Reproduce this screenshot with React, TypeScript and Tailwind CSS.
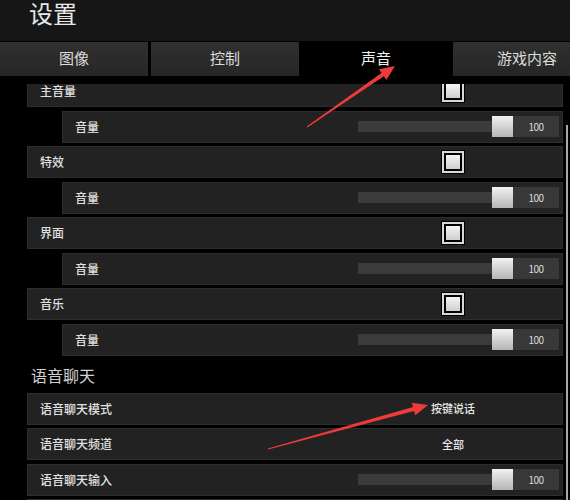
import React from 'react';

type Row =
  | { kind: 'toggle'; label: string }
  | { kind: 'volume'; label: string }
  | { kind: 'choice'; label: string; value: string }
  | { kind: 'slider'; label: string };

const soundRows: Row[] = [
  { kind: 'toggle', label: '主音量' },
  { kind: 'volume', label: '音量' },
  { kind: 'toggle', label: '特效' },
  { kind: 'volume', label: '音量' },
  { kind: 'toggle', label: '界面' },
  { kind: 'volume', label: '音量' },
  { kind: 'toggle', label: '音乐' },
  { kind: 'volume', label: '音量' },
];

const voiceRows: Row[] = [
  { kind: 'choice', label: '语音聊天模式', value: '按键说话' },
  { kind: 'choice', label: '语音聊天频道', value: '全部' },
  { kind: 'slider', label: '语音聊天输入' },
];

const tabs = ['图像', '控制', '声音', '游戏内容'];

const Checkbox = () => (
  <div className="w-[22px] h-[22px] border-2 border-[#d8d8d8] bg-black p-[2px] shadow-[0_0_0_1px_#000]">
    <div className="w-full h-full bg-gradient-to-b from-[#f4f4f4] to-[#cfcfcf]" />
  </div>
);

const Slider = () => (
  <div className="flex items-center">
    <div className="w-[134px] h-[11px] bg-[#3b3b3b]" />
    <div className="w-[21px] h-[21px] bg-gradient-to-b from-[#f2f2f2] to-[#b5b5b5]" />
    <div className="w-[46px] h-[21px] bg-[#383838] flex items-center justify-center text-[10px] text-[#dcdcdc] tracking-[-0.5px]">
      100
    </div>
  </div>
);

const SettingRow = ({ row }: { row: Row }) => {
  const child = row.kind === 'volume';
  return (
    <div
      className={`h-[32px] shrink-0 flex items-center justify-between bg-[#222222] border border-[#2d2d2d] pl-[12px] ${
        child ? 'ml-[35px]' : ''
      }`}
    >
      <span className="text-[12px] font-medium text-[#e0e0e0]">{row.label}</span>
      {row.kind === 'toggle' && (
        <div className="mr-[98px]">
          <Checkbox />
        </div>
      )}
      {(row.kind === 'volume' || row.kind === 'slider') && (
        <div className="mr-[3px]">
          <Slider />
        </div>
      )}
      {row.kind === 'choice' && (
        <div className="w-[60px] mr-[79px] text-center text-[11px] font-medium text-[#e6e6e6]">
          {row.value}
        </div>
      )}
    </div>
  );
};

function arrow(x1: number, y1: number, x2: number, y2: number) {
  const dx = x2 - x1;
  const dy = y2 - y1;
  const len = Math.hypot(dx, dy);
  const ux = dx / len;
  const uy = dy / len;
  const nx = -uy;
  const ny = ux;
  const head = 15;
  const hw = 6.5;
  const bx = x2 - ux * head;
  const by = y2 - uy * head;
  const t0 = 0.6;
  const t1 = 2;
  const pts = [
    [x1 + nx * t0, y1 + ny * t0],
    [bx + nx * t1, by + ny * t1],
    [bx + nx * hw, by + ny * hw],
    [x2, y2],
    [bx - nx * hw, by - ny * hw],
    [bx - nx * t1, by - ny * t1],
    [x1 - nx * t0, y1 - ny * t0],
  ];
  return pts.map((p) => p.join(',')).join(' ');
}

export default function App() {
  return (
    <div className="relative w-[570px] h-[500px] bg-black overflow-hidden flex flex-col font-['Noto_Sans_CJK_SC',sans-serif]">
      {/* Header */}
      <div className="h-[41px] shrink-0 bg-[#161616] pl-[29px] pt-[1px]">
        <h1 className="text-[24px] leading-[24px] text-[#e8e8e8]">设置</h1>
      </div>

      {/* Tabs */}
      <div className="h-[34px] shrink-0 flex gap-[3px] mt-[1px]">
        {tabs.map((t, i) => (
          <div
            key={t}
            className={`w-[148px] shrink-0 flex items-center justify-center pb-[2px] text-[15px] ${
              i === 2
                ? 'bg-black text-[#f0f0f0]'
                : 'bg-gradient-to-b from-[#303030] to-[#262626] text-[#dcdcdc]'
            }`}
          >
            {t}
          </div>
        ))}
      </div>

      {/* Content */}
      <div className="flex-1 flex mt-[8px] min-h-0">
        <div className="w-[563px] overflow-hidden pl-[27px]">
          <div className="-mt-[9px] flex flex-col gap-[3.5px]">
            {soundRows.map((r, i) => (
              <SettingRow key={i} row={r} />
            ))}
            <div className="h-[30px] shrink-0 flex items-center pt-[1px] pl-[4px] text-[16px] text-[#d0d0d0]">
              语音聊天
            </div>
            {voiceRows.map((r, i) => (
              <SettingRow key={'v' + i} row={r} />
            ))}
            <div className="h-[32px] shrink-0 bg-[#222222] border border-[#2d2d2d]" />
          </div>
        </div>
        <div className="flex-1 flex pt-[41px]">
          <div className="w-[2px] ml-[3px] bg-[#a8a8a8]" />
        </div>
      </div>

      {/* Annotations */}
      <svg className="absolute inset-0 pointer-events-none" width="570" height="500">
        <polygon points={arrow(307, 127, 395, 66)} fill="#ec3b3b" />
        <polygon points={arrow(268, 449, 428, 405)} fill="#ec3b3b" />
      </svg>
    </div>
  );
}
